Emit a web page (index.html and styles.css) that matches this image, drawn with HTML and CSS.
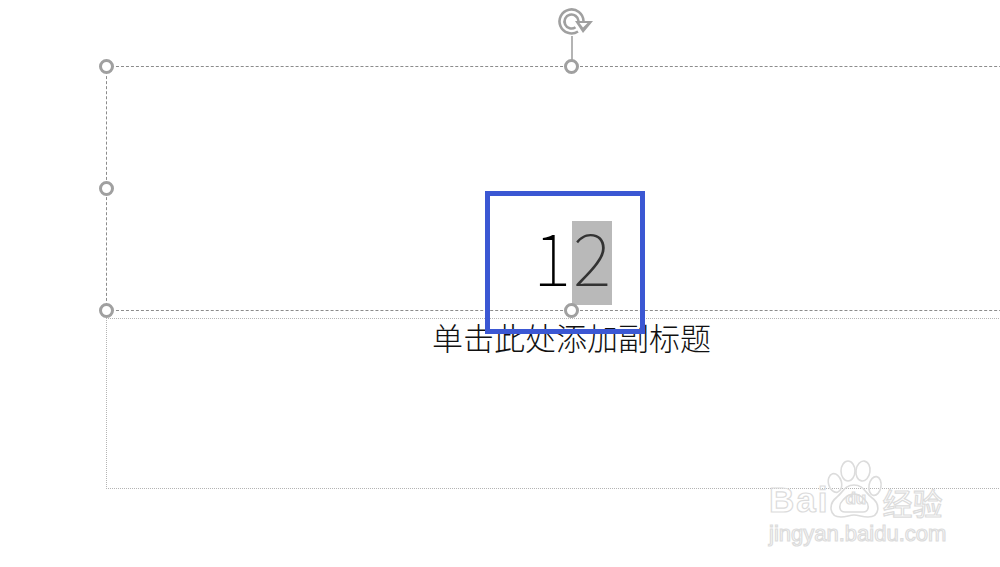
FILE: index.html
```html
<!DOCTYPE html>
<html lang="en">

<head>
  <meta charset="UTF-8">
  <title>单击此处添加副标题</title>

  <link rel="stylesheet" href="styles.css">
</head>

<body>
  <div class="slide">
    <!-- placeholders -->
    <div class="title-box"></div>
    <div class="subtitle-box"></div>
    <p class="subtitle">单击此处添加副标题</p>

    <!-- the text box being edited -->
    <div class="number-box">
      <span class="digit">1</span><span class="digit selected">2</span>
    </div>

    <!-- rotate handle -->
    <div class="stem"></div>
    <svg class="rotate" viewBox="0 0 36 30" width="36" height="30">
      <path d="M25.5 14 A12 12 0 1 0 20 24.5" fill="none" stroke="#a0a0a0" stroke-width="2.6" />
      <path d="M20.5 14 A7 7 0 1 0 17.5 20.3" fill="none" stroke="#a0a0a0" stroke-width="2.6" />
      <path d="M17 14 H35 L25 26 Z M21.5 16 L25 20.5 L29.5 16 Z" fill="#a0a0a0" fill-rule="evenodd" />
    </svg>

    <!-- resize handles -->
    <div class="handle h-top-left"></div>
    <div class="handle h-top"></div>
    <div class="handle h-left"></div>
    <div class="handle h-bottom-left"></div>
    <div class="handle h-bottom"></div>

    <!-- watermark -->
    <div class="watermark">
      <div class="wm-row">
        <span class="wm-bai">Bai</span>
        <div class="wm-paw">
          <svg viewBox="0 0 56 62" width="56" height="62">
            <g fill="none" stroke="#dcdcdc" stroke-width="1.6">
              <ellipse cx="8" cy="24" rx="6.5" ry="9.5" transform="rotate(-15 8 24)" />
              <ellipse cx="21" cy="12" rx="7" ry="10" />
              <ellipse cx="36" cy="12" rx="7" ry="10" transform="rotate(8 36 12)" />
              <ellipse cx="48" cy="27" rx="6" ry="9.5" transform="rotate(10 48 27)" />
              <path d="M27 26 C36 26 38 33 44 38 C54 45 53 58 41 58 C35 58 32 56 27 56 C22 56 20 58 14 58 C2 58 1 45 10 38 C16 33 18 26 27 26 Z" />
              <path d="M27 35 C33 35 35 38 38 41 C43 46 42 53 36 53 L18 53 C12 53 11 46 16 41 C19 38 21 35 27 35 Z" />
            </g>
          </svg>
          <span class="wm-du">du</span>
        </div>
        <span class="wm-cn">经验</span>
      </div>
      <div class="wm-url">jingyan.baidu.com</div>
    </div>
  </div>
</body>

</html>
```

FILE: styles.css
```css
html,
body {
  margin: 0;
  height: 100%;
  background: white;
}

.slide {
  position: relative;
  width: 1000px;
  height: 567px;
  overflow: hidden;
  background: white;
  font-family: "Noto Sans CJK SC", sans-serif;
}

.title-box {
  position: absolute;
  left: 106px;
  top: 66px;
  width: 960px;
  height: 243px;
  border: 1px dashed #8c8c8c;
  border-right: 0;
}

.subtitle-box {
  position: absolute;
  left: 106px;
  top: 318px;
  width: 960px;
  height: 169px;
  border: 1px dotted #b4b4b4;
  border-right: 0;
}

.subtitle {
  position: absolute;
  left: 432px;
  top: 314px;
  width: 290px;
  margin: 0;
  font-size: 31px;
  font-weight: 300;
  line-height: 46px;
  white-space: nowrap;
  color: #111;
}

.number-box {
  position: absolute;
  left: 485px;
  top: 191px;
  box-sizing: border-box;
  width: 160px;
  height: 143px;
  border: 5px solid #3b57d3;
  display: flex;
  padding: 25px 0 0 42px;
}

.digit {
  display: block;
  width: 40px;
  height: 84px;
  font-size: 73px;
  font-weight: 100;
  line-height: 66px;
  text-align: center;
  color: #000;
}

.selected {
  background: #b9b9b9;
  color: #333;
}

.stem {
  position: absolute;
  left: 571px;
  top: 36px;
  width: 2px;
  height: 25px;
  background: #b4b4b4;
}

.rotate {
  position: absolute;
  left: 558px;
  top: 7px;
}

.handle {
  position: absolute;
  box-sizing: border-box;
  width: 15px;
  height: 15px;
  border: 3px solid #a0a0a0;
  border-radius: 50%;
  background: white;
}

.h-top-left {
  left: 99px;
  top: 59px;
}

.h-top {
  left: 564px;
  top: 59px;
}

.h-left {
  left: 99px;
  top: 181px;
}

.h-bottom-left {
  left: 99px;
  top: 303px;
}

.h-bottom {
  left: 564px;
  top: 303px;
}

.watermark {
  position: absolute;
  left: 769px;
  top: 459px;
  width: 182px;
  display: flex;
  flex-direction: column;
  color: transparent;
  -webkit-text-stroke: 1.2px #dcdcdc;
}

.wm-row {
  display: flex;
  align-items: flex-end;
  height: 60px;
}

.wm-bai {
  font-family: "Liberation Sans", sans-serif;
  font-size: 35px;
  font-weight: 700;
  line-height: 39px;
  letter-spacing: 2px;
}

.wm-paw {
  position: relative;
  width: 56px;
  height: 62px;
  margin: 0 0 -2px -2px;
  flex: none;
}

.wm-du {
  position: absolute;
  left: 18px;
  bottom: 12px;
  font-family: "Liberation Sans", sans-serif;
  font-size: 17px;
  font-weight: 700;
  line-height: 20px;
}

.wm-cn {
  font-size: 30px;
  line-height: 34px;
  margin-left: -1px;
  white-space: nowrap;
}

.wm-url {
  font-family: "Liberation Sans", sans-serif;
  font-size: 22px;
  line-height: 24px;
  margin-top: 3px;
  white-space: nowrap;
}
```
